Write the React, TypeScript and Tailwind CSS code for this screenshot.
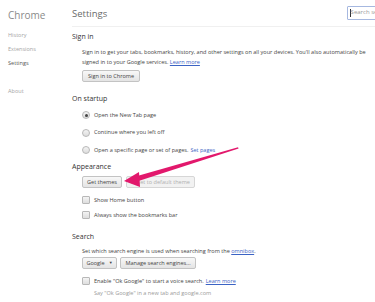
import React from "react";

const Radio = ({ checked }: { checked?: boolean }) => (
  <span className="w-[8px] h-[8px] rounded-full border border-[#b8b8b8] bg-gradient-to-b from-[#f4f4f4] to-[#dcdcdc] flex items-center justify-center shrink-0">
    {checked && <span className="w-[3px] h-[3px] rounded-full bg-[#444]" />}
  </span>
);

const Check = () => (
  <span className="w-[8px] h-[8px] rounded-[1px] border border-[#b8b8b8] bg-gradient-to-b from-[#f4f4f4] to-[#dedede] shrink-0" />
);

const Btn = ({ children, disabled, w }: { children: React.ReactNode; disabled?: boolean; w?: string }) => (
  <span
    className={`h-[12px] px-[5px] flex items-center justify-center whitespace-nowrap rounded-[2px] border ${
      disabled ? "border-[#d6d6d6] text-[#b0b0b0] bg-[#f2f2f2]" : "border-[#c3c3c3] text-[#444] bg-gradient-to-b from-[#f8f8f8] to-[#e4e4e4]"
    } ${w ?? ""}`}
  >
    {children}
  </span>
);

export default function App() {
  return (
    <div
      className="relative w-[375px] h-[302px] overflow-hidden bg-white flex text-[5.55px] text-[#444]"
      style={{ fontFamily: '"Open Sans", "Noto Sans", sans-serif' }}
    >
      <aside className="w-[72px] shrink-0 pl-[8px] pt-[8px] flex flex-col">
        <div className="text-[10px] leading-[14px] text-[#8a8a8a]">Chrome</div>
        <div className="mt-[6px] flex flex-col text-[#a5a5a5]">
          <span className="h-[14px] leading-[14px]">History</span>
          <span className="h-[14px] leading-[14px]">Extensions</span>
          <span className="h-[14px] leading-[14px] text-[#555]">Settings</span>
          <span className="h-[14px] leading-[14px] mt-[14px]">About</span>
        </div>
      </aside>
      <main className="flex-1 min-w-0 flex flex-col">
        <div className="h-[27px] shrink-0 flex items-center justify-between border-b border-[#f0f0f0] pt-[2px]">
          <span className="text-[9.5px] text-[#6a6a6a]">Settings</span>
          <span className="w-[40px] h-[14px] mr-[-12px] mb-[3px] border border-[#a6b8e0] rounded-[1px] flex items-center pl-[2px] text-[#9a9a9a] text-[6px] whitespace-nowrap overflow-hidden">
            <span className="w-[0.6px] h-[8px] bg-[#333] shrink-0" />
            Search settings
          </span>
        </div>

        <div className="text-[7px] text-[#333] mt-[5px] leading-[10px]">Sign in</div>
        <div className="pl-[10px] mt-[5px] leading-[10px]">
          <div className="whitespace-nowrap">Sign in to get your tabs, bookmarks, history, and other settings on all your devices. You'll also automatically be</div>
          <div>
            signed in to your Google services. <span className="text-[#3b63c4] underline">Learn more</span>
          </div>
          <div className="mt-[3px] flex">
            <Btn>Sign in to Chrome</Btn>
          </div>
        </div>

        <div className="text-[7px] text-[#333] mt-[12px] leading-[10px]">On startup</div>
        <div className="pl-[10px] mt-[6px] flex flex-col gap-[7.5px]">
          <div className="flex items-center gap-[4px] h-[10px]"><Radio checked />Open the New Tab page</div>
          <div className="flex items-center gap-[4px] h-[10px]"><Radio />Continue where you left off</div>
          <div className="flex items-center gap-[4px] h-[10px]"><Radio />Open a specific page or set of pages. <span className="text-[#3b63c4] -ml-[2px]">Set pages</span></div>
        </div>

        <div className="text-[7px] text-[#333] mt-[7px] leading-[10px]">Appearance</div>
        <div className="pl-[10px] mt-[4px] flex flex-col">
          <div className="flex gap-[4px]">
            <Btn w="w-[40px]">Get themes</Btn>
            <Btn disabled w="w-[69px]">Reset to default theme</Btn>
          </div>
          <div className="flex items-center gap-[4px] h-[10px] mt-[7px]"><Check />Show Home button</div>
          <div className="flex items-center gap-[4px] h-[10px] mt-[5px]"><Check />Always show the bookmarks bar</div>
        </div>

        <div className="text-[7px] text-[#333] mt-[12px] leading-[10px]">Search</div>
        <div className="pl-[10px] mt-[4px] flex flex-col">
          <div className="leading-[10px]">
            Set which search engine is used when searching from the <span className="text-[#3b63c4] underline">omnibox</span>.
          </div>
          <div className="flex gap-[3px] mt-[1px]">
            <Btn w="w-[35px]">
              Google<span className="ml-[4px] text-[4px]">▼</span>
            </Btn>
            <Btn w="w-[76px]">Manage search engines...</Btn>
          </div>
          <div className="flex items-center gap-[4px] h-[10px] mt-[7px]">
            <Check />Enable "Ok Google" to start a voice search. <span className="text-[#3b63c4] underline -ml-[2px]">Learn more</span>
          </div>
          <div className="pl-[12px] leading-[10px] mt-[2px] text-[#9a9a9a]">Say "Ok Google" in a new tab and google.com</div>
        </div>
      </main>

      <svg className="absolute left-0 top-0 pointer-events-none" width="375" height="302" viewBox="0 0 375 302">
        <path d="M238 147.3 L238.6 148.6 L137 181.5 L135.5 176.5 Z" fill="#e2186c" />
        <path d="M124 181 L139 172 L140 187 Z" fill="#e2186c" />
      </svg>
    </div>
  );
}
